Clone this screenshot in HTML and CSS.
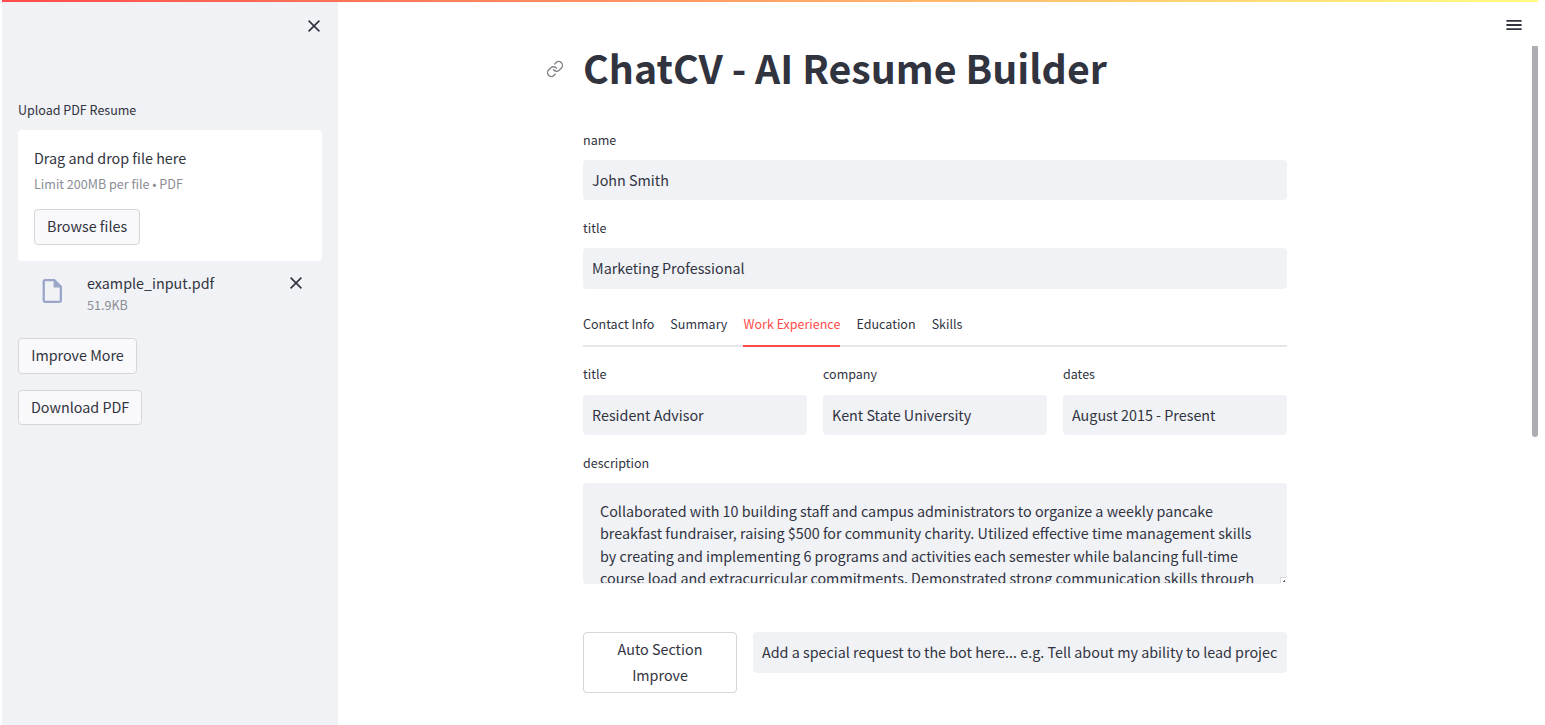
FILE: index.html
```html
<!DOCTYPE html>
<html lang="en">
<head>
<meta charset="utf-8">
<title>ChatCV - AI Resume Builder</title>
<link rel="stylesheet" href="styles.css">
</head>
<body>
<div class="app">
  <div class="decoration"></div>
  <aside class="sidebar">
    <div class="sidebar-top">
      <svg class="cross" viewBox="0 0 14 14"><path d="M1.6 1.6 12.4 12.4M12.4 1.6 1.6 12.4"/></svg>
    </div>
    <div class="label upload-label"><span>Upload PDF Resume</span></div>
    <section class="dropzone">
      <div class="drop-title">Drag and drop file here</div>
      <div class="drop-limit small">Limit 200MB per file • PDF</div>
      <button class="btn browse">Browse files</button>
    </section>
    <div class="file">
      <svg class="file-icon" viewBox="0 0 20 24"><path fill-rule="evenodd" d="M3 0H12.8L20 7.2V21.6A2.4 2.4 0 0 1 17.6 24H3A2.4 2.4 0 0 1 .6 21.6V2.4A2.4 2.4 0 0 1 3 0ZM2.9 2.2V21.7H17.7V8.4H11.6V2.2Z"/></svg>
      <div class="file-info">
        <div class="file-name">example_input.pdf</div>
        <div class="file-size small">51.9KB</div>
      </div>
      <svg class="cross" viewBox="0 0 14 14"><path d="M1.6 1.6 12.4 12.4M12.4 1.6 1.6 12.4"/></svg>
    </div>
    <button class="btn improve">Improve More</button>
    <button class="btn download">Download PDF</button>
  </aside>
  <main class="main">
    <div class="content">
      <h1><svg class="link" viewBox="0 0 24 24"><path d="M10 13a5 5 0 0 0 7.54.54l3-3a5 5 0 0 0-7.07-7.07l-1.72 1.71"/><path d="M14 11a5 5 0 0 0-7.54-.54l-3 3a5 5 0 0 0 7.07 7.07l1.71-1.71"/></svg><span>ChatCV - AI Resume Builder</span></h1>
      <div class="field name-field"><div class="label">name</div><div class="input">John Smith</div></div>
      <div class="field title-field"><div class="label">title</div><div class="input tall">Marketing Professional</div></div>
      <nav class="tabs">
        <span class="tab">Contact Info</span><span class="tab">Summary</span><span class="tab active">Work Experience</span><span class="tab">Education</span><span class="tab">Skills</span>
      </nav>
      <div class="columns">
        <div class="field"><div class="label">title</div><div class="input">Resident Advisor</div></div>
        <div class="field"><div class="label">company</div><div class="input">Kent State University</div></div>
        <div class="field"><div class="label">dates</div><div class="input">August 2015 - Present</div></div>
      </div>
      <div class="field description"><div class="label">description</div>
        <div class="textarea">
          <div class="text">Collaborated with 10 building staff and campus administrators to organize a weekly pancake<br>breakfast fundraiser, raising $500 for community charity. Utilized effective time management skills<br>by creating and implementing 6 programs and activities each semester while balancing full-time<br>course load and extracurricular commitments. Demonstrated strong communication skills through</div>
          <svg class="resizer" viewBox="0 0 7 7"><path fill="#fff" d="M1 1H7V5L5 7H1Z"/><path fill="#d5d6da" d="M0 0H6V1H1V6H0Z"/><path fill="#62636c" d="M4 3H5V5H3V4H4Z"/></svg>
        </div>
      </div>
      <div class="actions">
        <button class="btn auto">Auto Section<br>Improve</button>
        <div class="input tall">Add a special request to the bot here... e.g. Tell about my ability to lead projec</div>
      </div>
    </div>
  </main>
  <svg class="menu" viewBox="0 0 16 12"><path d="M.4 1.8H15.6M.4 6H15.6M.4 10.2H15.6"/></svg>
  <div class="scrollbar"></div>
</div>
</body>
</html>
```
FILE: styles.css
```css
* { box-sizing: border-box; }
body {
  margin: 0;
  background: #fff;
  color: #31333f;
  font-family: "Noto Sans CJK JP", "Noto Sans", sans-serif;
  font-size: 14.33px;
  line-height: 25.6px;
  overflow: hidden;
}
.app {
  position: relative;
  display: flex;
  width: 1536px;
  height: 725px;
  margin-left: 2px;
  white-space: nowrap;
}
.decoration {
  position: absolute;
  top: 0;
  left: 0;
  right: 0;
  height: 2px;
  background: linear-gradient(90deg, #ff4b4b, #fffd80);
}
.sidebar {
  flex: none;
  width: 336px;
  padding: 0 16px;
  background: #f0f2f6;
}
.sidebar-top {
  display: flex;
  justify-content: flex-end;
  height: 100px;
  padding: 19px 1px 0 0;
}
.cross {
  flex: none;
  width: 14px;
  height: 14px;
  fill: none;
  stroke: #31333f;
  stroke-width: 1.6;
}
.label {
  height: 30px;
  font-size: 12.53px;
  line-height: 19px;
}
.small { font-size: 12.55px; color: #8b8d96; }
.dropzone {
  height: 131px;
  padding: 15px 16px 16px;
  border-radius: 4px;
  background: #fff;
}
.drop-limit { height: 38px; }
.btn {
  display: block;
  height: 36px;
  padding: 0 12px 2px;
  border: 1px solid #d6d6d9;
  border-radius: 4px;
  background: #f9f9fb;
  color: inherit;
  font: inherit;
  line-height: 32px;
  white-space: nowrap;
}
.browse { width: 106px; }
.improve { width: 119px; }
.download { width: 124px; height: 35px; margin-top: 16px; }
.file {
  display: flex;
  height: 77px;
  padding: 9px 19px 0 24px;
}
.file-icon { width: 20px; height: 24px; margin: 9px 25px 0 0; fill: #9aa6c8; }
.file-info { flex: 1; }
.file-name { line-height: 25px; }
.file-size { line-height: 19px; }
.file .cross { margin-top: 6px; }
.main { flex: 1; }
.content { width: 704px; margin: 0 auto 0 245px; padding-top: 40px; }
h1 {
  position: relative;
  height: 90px;
  margin: 0;
  font-size: 39.3px;
  font-weight: 700;
  line-height: 53px;
}
.link {
  position: absolute;
  left: -37px;
  top: 20px;
  width: 18px;
  height: 18px;
  fill: none;
  stroke: #83848c;
  stroke-width: 1.9;
  stroke-linecap: round;
  stroke-linejoin: round;
}
.input {
  height: 40px;
  padding: 0 9px;
  border-radius: 4px;
  background: #f0f2f6;
  line-height: 40px;
  overflow: hidden;
}
.input.tall { height: 41px; }
.name-field { height: 88px; }
.title-field { height: 87px; }
.tabs {
  display: flex;
  gap: 16.1px;
  height: 42px;
  border-bottom: 2px solid #e6e7eb;
  font-size: 12.53px;
  line-height: 38px;
}
.tab { height: 42px; }
.tab.active { color: #ff4b4b; border-bottom: 2px solid #ff4b4b; }
.columns {
  display: grid;
  grid-template-columns: repeat(3, 1fr);
  gap: 16px;
  height: 106px;
  padding-top: 17px;
}
.columns .label { height: 31px; }
.textarea {
  position: relative;
  height: 101px;
  padding: 17px 17px 0;
  border-radius: 4px;
  background: #f0f2f6;
}
.text { height: 83px; line-height: 22.4px; overflow: hidden; }
.resizer { position: absolute; right: 0; bottom: 0; width: 7px; height: 7px; }
.actions { display: grid; grid-template-columns: 154px 534px; gap: 16px; margin-top: 48px; }
.auto { height: 61px; background: #fff; line-height: 26px; padding-bottom: 2px; }
.menu {
  position: absolute;
  top: 19px;
  left: 1504px;
  width: 16px;
  height: 12px;
  fill: none;
  stroke: #31333f;
  stroke-width: 1.8;
}
.scrollbar {
  position: absolute;
  top: 46px;
  right: 0;
  width: 6px;
  height: 391px;
  border-radius: 0 0 3px 3px;
  background: #adadb3;
}
```
